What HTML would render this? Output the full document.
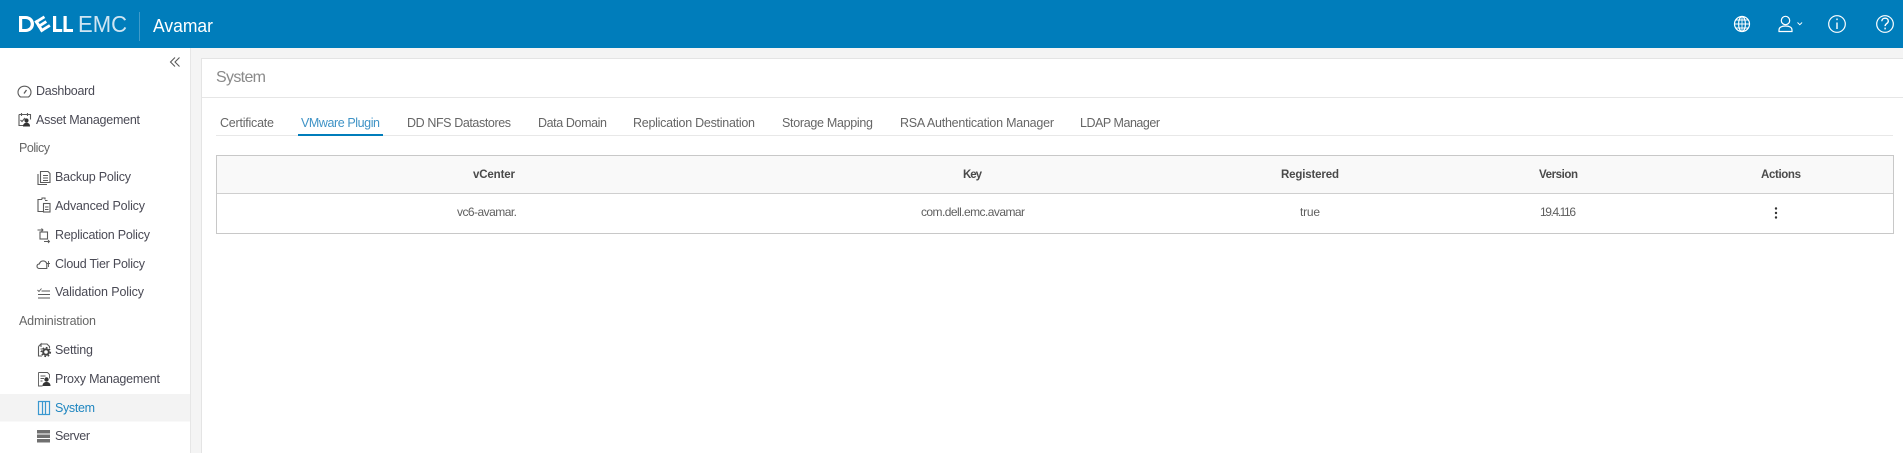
<!DOCTYPE html>
<html lang="en">
<head>
<meta charset="utf-8">
<title>Avamar - System</title>
<style>
html,body{margin:0;padding:0;width:1903px;height:453px;overflow:hidden;background:#f4f4f4}
svg{display:block}
text{font-family:"Liberation Sans",sans-serif;font-size:12.5px;fill:#4a4a4a}
.nav{fill:#4a4a55}
.sec{fill:#666}
.tab{fill:#666;font-size:12.5px}
.th{fill:#4a4a4a;font-weight:bold;font-size:11.5px}
.td{fill:#5f5f5f;font-size:12px}
.i{fill:none;stroke:#5a5a5a;stroke-width:1.1}
.w{fill:none;stroke:#fff;stroke-width:1.2}
</style>
</head>
<body>
<svg width="1903" height="453" viewBox="0 0 1903 453" xmlns="http://www.w3.org/2000/svg">
<!-- header -->
<rect x="0" y="0" width="1903" height="48" fill="#007dbb"/>
<g fill="#fff">
<path d="M19 16h6.500c4.800 0 8.500 3.300 8.500 8s-3.700 8-8.500 8H19zM22.200 19v10h3.300c3 0 5.200-2.100 5.200-5s-2.200-5-5.200-5z"/>
<g transform="rotate(-32 42.500 24)">
<rect x="37" y="17.500" width="3" height="13"/>
<rect x="37" y="17.500" width="11" height="2.800"/>
<rect x="37" y="22.600" width="10" height="2.800"/>
<rect x="37" y="27.700" width="11" height="2.800"/>
</g>
<path d="M53 16h3.200v13h6v3H53zM63.500 16h3.200v13h6.300v3h-9.500z"/>
</g>
<text x="78" y="32" textLength="49" lengthAdjust="spacingAndGlyphs" style="font-size:23px;fill:#cfe5f2">EMC</text>
<rect x="139" y="12" width="1" height="29" fill="#3f9bca"/>
<text x="153" y="32" style="font-size:18.5px;fill:#fff" textLength="60" lengthAdjust="spacingAndGlyphs">Avamar</text>
<!-- header icons -->
<g class="w">
<circle cx="1742" cy="24" r="7.500"/>
<ellipse cx="1742" cy="24" rx="3.400" ry="7.500"/>
<path d="M1734.500 24h15M1735.500 20h13M1735.500 28h13M1742 16.500v15" stroke-width=".9"/>
<circle cx="1785.500" cy="20.500" r="4.200"/>
<path d="M1779 31.500v-1.500c0-2.600 2.600-4 6.500-4s6.500 1.400 6.500 4v1.500z"/>
<path d="M1797.500 22.500l2.300 2.200 2.300-2.200" stroke-width=".9"/>
<circle cx="1837" cy="24" r="8.300"/>
<path d="M1837 22.500v6.500M1837 18.500v1.600" stroke-width="1.400"/>
<circle cx="1885" cy="24" r="8.300"/>
<path d="M1881.800 21.300c0-1.900 1.400-3.100 3.300-3.100s3.200 1.200 3.200 2.900c0 2.500-3.200 2.500-3.200 5" stroke-width="1.400"/>
<path d="M1885.100 27.600v1.800" stroke-width="1.400"/>
</g>
<!-- sidebar -->
<rect x="0" y="48" width="190" height="405" fill="#fff"/>
<rect x="190" y="48" width="1" height="405" fill="#e6e6e6"/>
<path class="i" d="M175 57.500l-4.500 4.500 4.500 4.500M179.500 57.500l-4.500 4.500 4.500 4.500"/>
<rect x="0" y="394" width="190" height="27.500" fill="#f3f3f3"/>

<text class="nav" x="36" y="95" textLength="59">Dashboard</text>
<text class="nav" x="36" y="124" textLength="104">Asset Management</text>
<text class="sec" x="19" y="152" textLength="31">Policy</text>
<text class="nav" x="55" y="181" textLength="76">Backup Policy</text>
<text class="nav" x="55" y="210" textLength="90">Advanced Policy</text>
<text class="nav" x="55" y="239" textLength="95">Replication Policy</text>
<text class="nav" x="55" y="268" textLength="90">Cloud Tier Policy</text>
<text class="nav" x="55" y="296" textLength="89">Validation Policy</text>
<text class="sec" x="19" y="325" textLength="77">Administration</text>
<text class="nav" x="55" y="354" textLength="38">Setting</text>
<text class="nav" x="55" y="383" textLength="105">Proxy Management</text>
<text x="55" y="412" textLength="40" style="fill:#1f86c0">System</text>
<text class="nav" x="55" y="440" textLength="35">Server</text>

<!-- sidebar icons -->
<g class="i">
<path d="M20.500 97c-1.600-1.200-2.500-2.900-2.500-4.800 0-3.400 2.900-6 6.500-6s6.500 2.600 6.500 6c0 1.900-.9 3.600-2.500 4.800z"/>
<path d="M24 93.500l2.500-3.500" stroke-width="1.300"/>
<path d="M19 114.500h11.500v5M19 114.500v11h5M21.500 113v3M27.500 113v3"/>
<path d="M20.500 120l1.500 1.500 3-3.500" stroke-width="1.200"/>
<path d="M40.500 171.500h7.500l2 2v9h-9.500zM38 174v10.500h9"/>
<path d="M43 175.500h5M43 178h5M43 180.500h5" stroke-width=".9"/>
<path d="M42 199.500h-4v12h5M42 199.500v-1.500h3v1.500M45 200.500h2.500"/>
<rect x="43.500" y="203.500" width="6.500" height="8.500"/>
<path d="M45 207h3.500M45 209.500h3.500" stroke-width=".9"/>
<rect x="40" y="232" width="7.500" height="7"/>
<path d="M37.500 230h5.500M41.500 228.500l1.500 1.500-1.500 1.500M44 241.500h5.500M48 240l1.500 1.500-1.500 1.500" stroke-width=".9"/>
<path d="M39.500 268.500c-1.500 0-2.500-1-2.500-2.300s1-2.300 2.400-2.300c.5-1.800 2-3 3.700-3 1.900 0 3.300 1.200 3.700 3v4.600z"/>
<path d="M48.500 261v6M47 263.500h3" stroke-width=".9"/>
<path d="M41.500 291h8.500M38 294.500h12M38 298h12M37.500 290l1.500 1.500 2.500-3" stroke-width=".9"/>
<path d="M41 344h6l2.500 2.500V348M38.500 346.500l2.500-2.500v3M38.500 346.500V356H42"/>
<path d="M40.500 349h2.500M40.500 351.500h1.500" stroke-width=".9"/>
<path d="M38.500 372.500h9l2 2v4M38.500 372.500V386h4M40.500 376h5M40.500 378.500h3.500M40.500 381h2" stroke-width=".9"/>
<g stroke="#3a98d0" stroke-width="1.200">
<rect x="38.500" y="401.500" width="11" height="13"/>
<path d="M42.500 401.500v13M45.500 401.500v13"/>
</g>
</g>
<circle cx="46" cy="352" r="2.800" fill="none" stroke="#444" stroke-width="2"/>
<circle cx="46" cy="352" r="4.400" fill="none" stroke="#444" stroke-width="1.400" stroke-dasharray="1.700 1.700"/>
<circle cx="46.500" cy="379.500" r="2.200" fill="#333"/>
<path d="M42.500 386c0-2.800 1.700-4 4-4s4 1.200 4 4z" fill="#333"/>
<circle cx="26.500" cy="120.500" r="2.100" fill="#333"/>
<path d="M23 126.500c0-2.600 1.500-3.700 3.500-3.700s3.500 1.100 3.500 3.700z" fill="#333"/>
<rect x="37" y="430" width="13" height="3.500" fill="#707070"/>
<rect x="37" y="434.500" width="13" height="3.500" fill="#707070"/>
<rect x="37" y="439" width="13" height="3.500" fill="#707070"/>

<!-- card -->
<rect x="201" y="58" width="1702" height="395" fill="#fff"/>
<rect x="201" y="58" width="1702" height="1" fill="#e4e4e4"/>
<rect x="201" y="58" width="1" height="395" fill="#e4e4e4"/>
<rect x="202" y="97" width="1701" height="1" fill="#e6e6e6"/>
<text x="216" y="82" style="font-size:16px;fill:#8a8a8a" textLength="50">System</text>

<!-- tabs -->
<rect x="216" y="135" width="1677" height="1" fill="#e8e8e8"/>
<rect x="298" y="134" width="85" height="2" fill="#007dbb"/>
<text class="tab" x="220" y="127" textLength="54">Certificate</text>
<text class="tab" x="301" y="127" textLength="79" style="fill:#3f93c6">VMware Plugin</text>
<text class="tab" x="407" y="127" textLength="104">DD NFS Datastores</text>
<text class="tab" x="538" y="127" textLength="69">Data Domain</text>
<text class="tab" x="633" y="127" textLength="122">Replication Destination</text>
<text class="tab" x="782" y="127" textLength="91">Storage Mapping</text>
<text class="tab" x="900" y="127" textLength="154">RSA Authentication Manager</text>
<text class="tab" x="1080" y="127" textLength="80">LDAP Manager</text>

<!-- table -->
<rect x="216.500" y="155.500" width="1677" height="78" fill="#fff" stroke="#c8c8c8"/>
<rect x="217" y="156" width="1676" height="37" fill="#f9f9f9"/>
<rect x="217" y="193" width="1676" height="1" fill="#cfcfcf"/>
<text class="th" x="473" y="178" textLength="42">vCenter</text>
<text class="th" x="963" y="178" textLength="19">Key</text>
<text class="th" x="1281" y="178" textLength="58">Registered</text>
<text class="th" x="1539" y="178" textLength="39">Version</text>
<text class="th" x="1761" y="178" textLength="40">Actions</text>
<text class="td" x="457" y="216" textLength="60">vc6-avamar.</text>
<text class="td" x="921" y="216" textLength="104">com.dell.emc.avamar</text>
<text class="td" x="1300" y="216" textLength="20">true</text>
<text class="td" x="1540" y="216" textLength="36">19.4.116</text>
<g fill="#333">
<circle cx="1776" cy="208.500" r="1.200"/>
<circle cx="1776" cy="213" r="1.200"/>
<circle cx="1776" cy="217.500" r="1.200"/>
</g>
</svg>
</body>
</html>
